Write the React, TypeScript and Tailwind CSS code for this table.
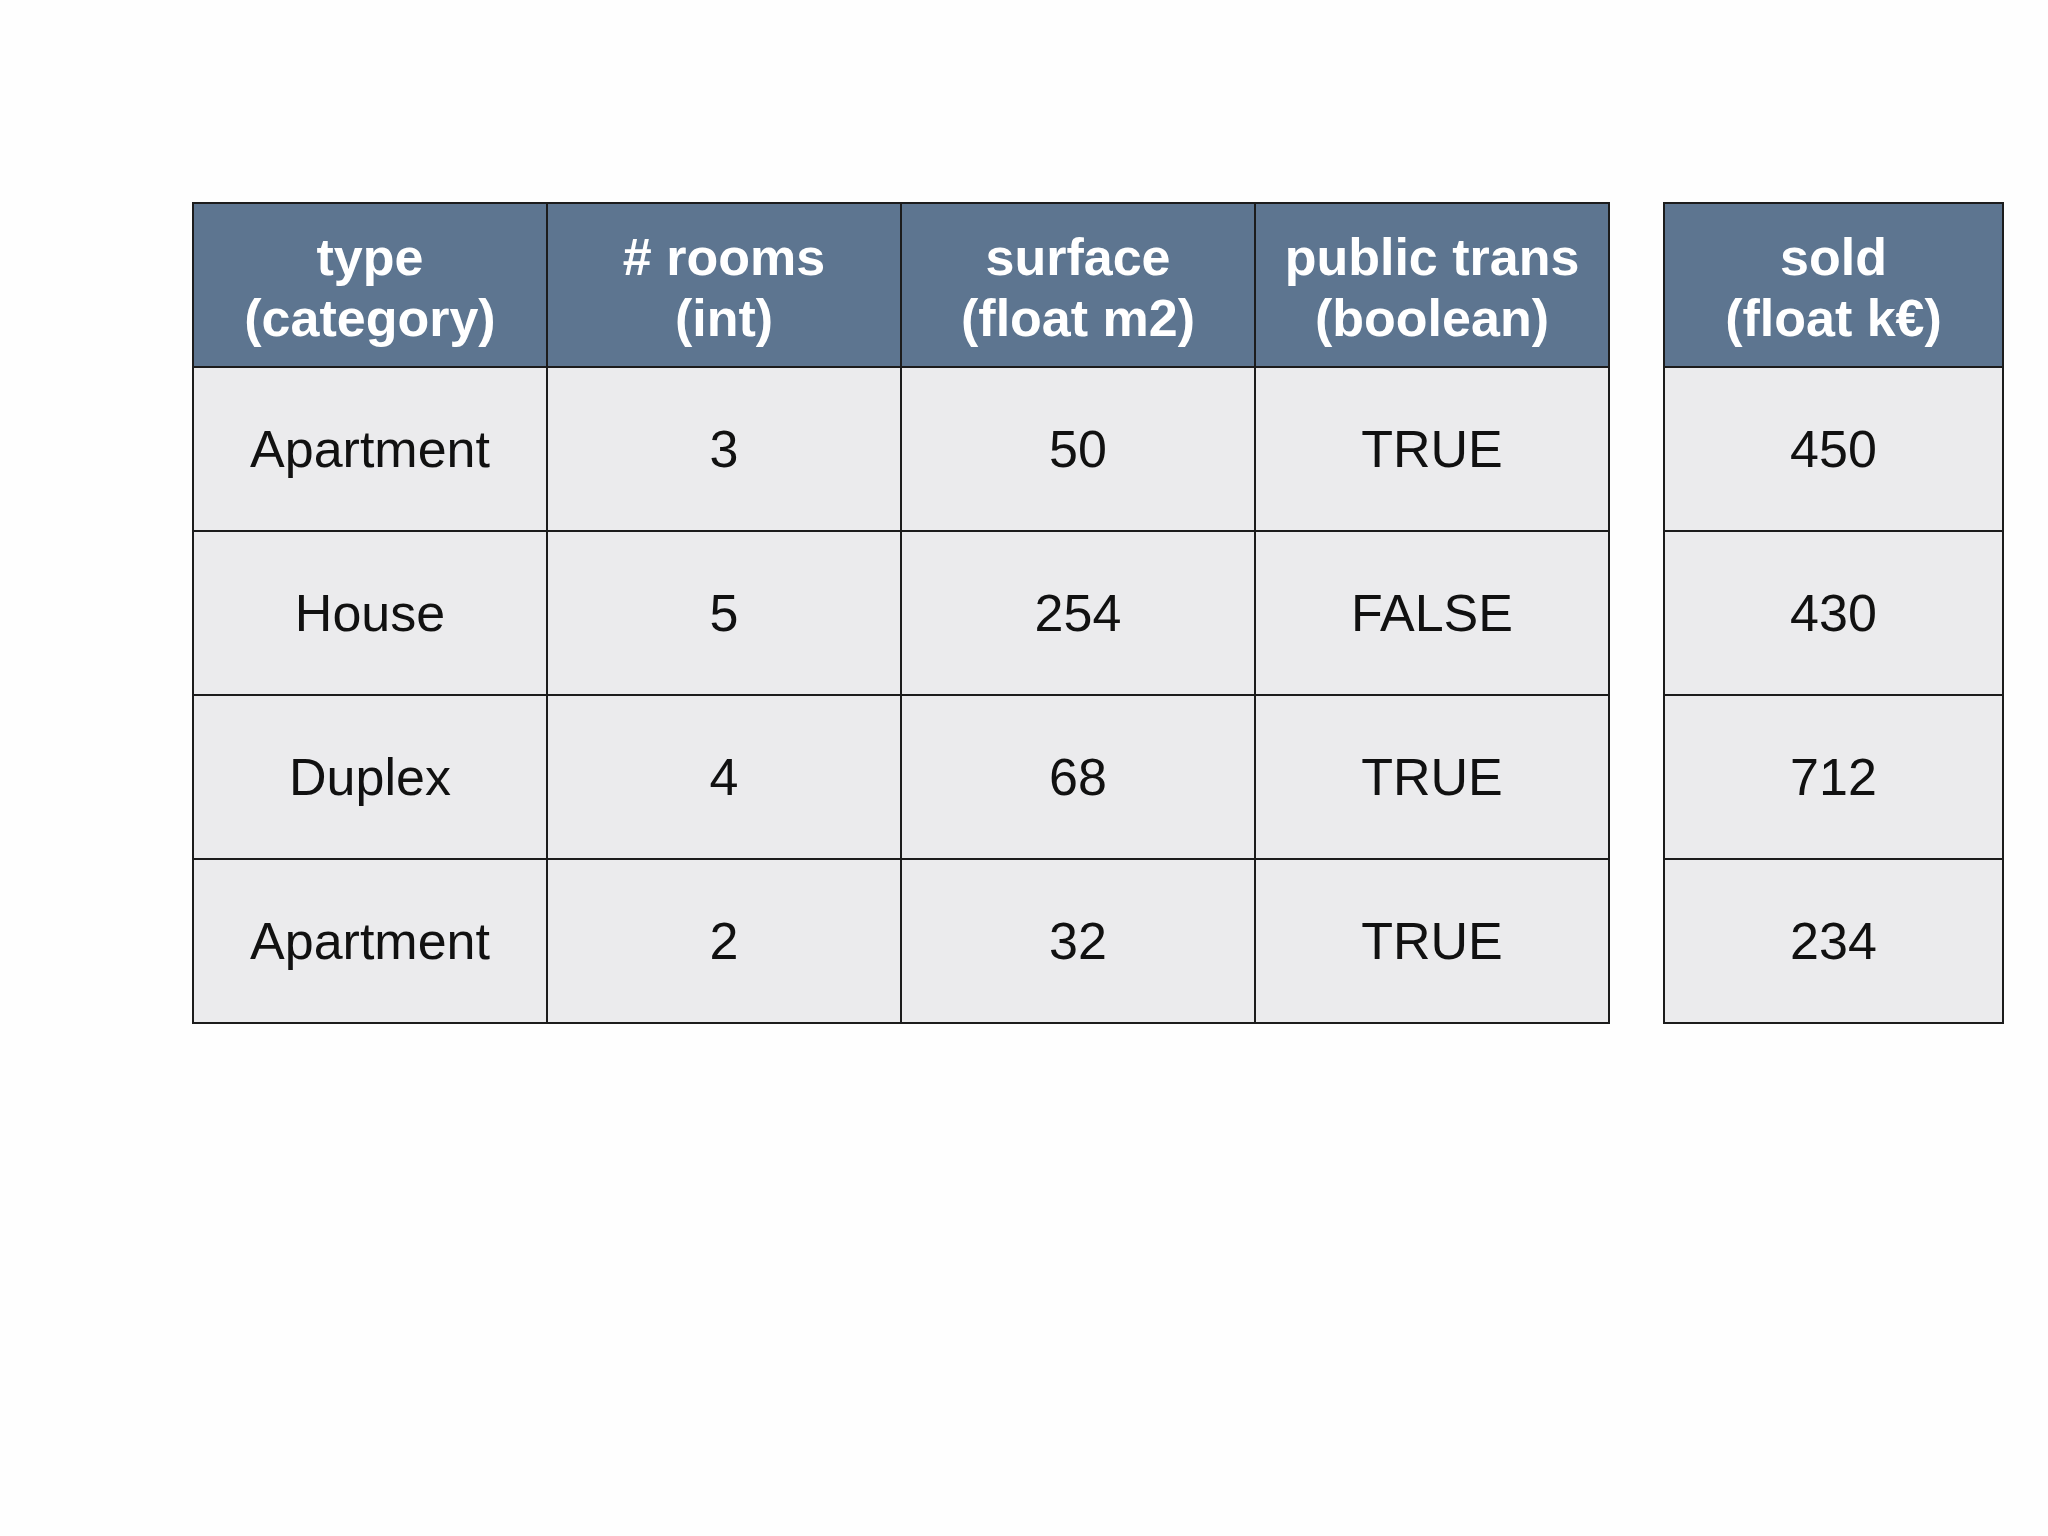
import React from "react";

const headers = [
  ["type", "(category)"],
  ["# rooms", "(int)"],
  ["surface", "(float m2)"],
  ["public trans", "(boolean)"],
];

const rows = [
  ["Apartment", "3", "50", "TRUE", "450"],
  ["House", "5", "254", "FALSE", "430"],
  ["Duplex", "4", "68", "TRUE", "712"],
  ["Apartment", "2", "32", "TRUE", "234"],
];

function HeadCell({ lines, w }: { lines: string[]; w: string }) {
  return (
    <div
      className={`${w} h-[164px] shrink-0 border-r-2 border-b-2 border-[#1c1c1c] bg-[#5d7590] flex flex-col items-center justify-center text-white font-bold text-[52px] leading-[61px] pt-[6px]`}
    >
      {lines.map((l) => (
        <div key={l}>{l}</div>
      ))}
    </div>
  );
}

function BodyCell({ text, w }: { text: string; w: string }) {
  return (
    <div
      className={`${w} h-[164px] shrink-0 border-r-2 border-b-2 border-[#1c1c1c] bg-[#ebebed] flex items-center justify-center text-[#111] text-[52px] leading-none`}
    >
      {text}
    </div>
  );
}

export default function App() {
  return (
    <div
      className="w-[2048px] h-[1536px] bg-[#fefefe] pt-[202px] pl-[192px] flex items-start"
      style={{ fontFamily: '"Liberation Sans", Arial, sans-serif' }}
    >
      <div className="flex flex-col border-l-2 border-t-2 border-[#1c1c1c]">
        <div className="flex">
          {headers.map((h) => (
            <HeadCell key={h[0]} lines={h} w="w-[354px]" />
          ))}
        </div>
        {rows.map((r, i) => (
          <div key={i} className="flex">
            {r.slice(0, 4).map((c, j) => (
              <BodyCell key={j} text={c} w="w-[354px]" />
            ))}
          </div>
        ))}
      </div>
      <div className="ml-[53px] flex flex-col border-l-2 border-t-2 border-[#1c1c1c]">
        <HeadCell lines={["sold", "(float k€)"]} w="w-[339px]" />
        {rows.map((r, i) => (
          <BodyCell key={i} text={r[4]} w="w-[339px]" />
        ))}
      </div>
    </div>
  );
}
